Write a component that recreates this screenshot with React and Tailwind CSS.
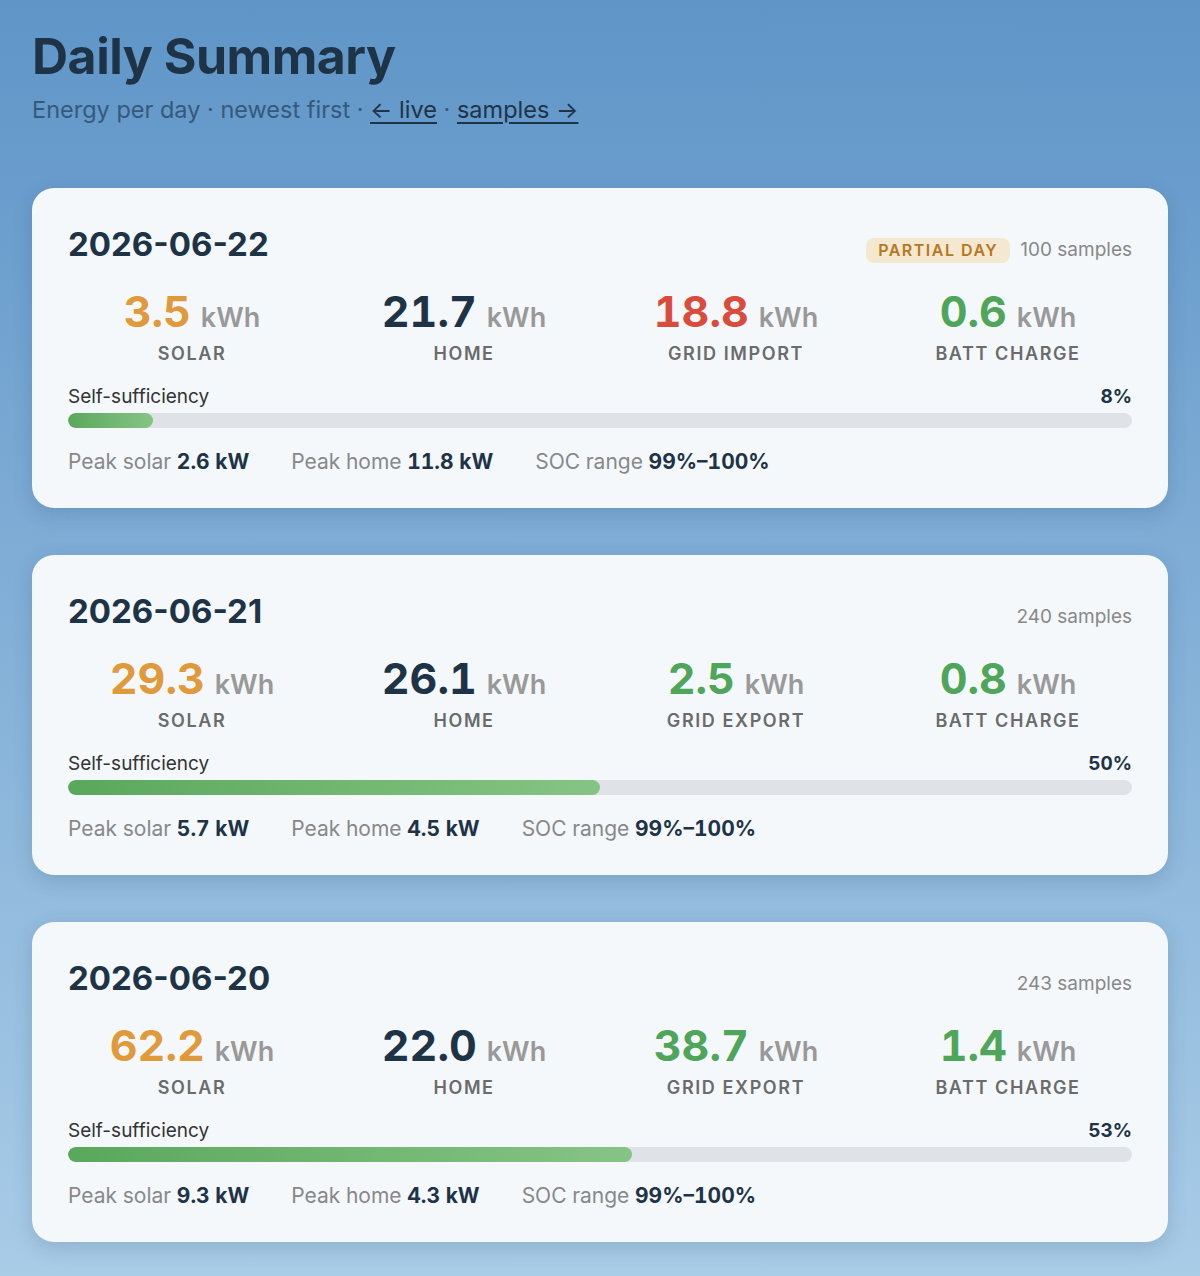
import React from 'react';

const days = [
  {
    date: '2026-06-22',
    partial: true,
    samples: 100,
    metrics: [
      { value: '3.5', label: 'Solar', color: 'text-[#e09a3c]' },
      { value: '21.7', label: 'Home', color: 'text-[#1e3446]' },
      { value: '18.8', label: 'Grid import', color: 'text-[#d94c3d]' },
      { value: '0.6', label: 'Batt charge', color: 'text-[#4fa65a]' },
    ],
    selfSuff: 8,
    peakSolar: '2.6 kW',
    peakHome: '11.8 kW',
    soc: '99%–100%',
  },
  {
    date: '2026-06-21',
    partial: false,
    samples: 240,
    metrics: [
      { value: '29.3', label: 'Solar', color: 'text-[#e09a3c]' },
      { value: '26.1', label: 'Home', color: 'text-[#1e3446]' },
      { value: '2.5', label: 'Grid export', color: 'text-[#4fa65a]' },
      { value: '0.8', label: 'Batt charge', color: 'text-[#4fa65a]' },
    ],
    selfSuff: 50,
    peakSolar: '5.7 kW',
    peakHome: '4.5 kW',
    soc: '99%–100%',
  },
  {
    date: '2026-06-20',
    partial: false,
    samples: 243,
    metrics: [
      { value: '62.2', label: 'Solar', color: 'text-[#e09a3c]' },
      { value: '22.0', label: 'Home', color: 'text-[#1e3446]' },
      { value: '38.7', label: 'Grid export', color: 'text-[#4fa65a]' },
      { value: '1.4', label: 'Batt charge', color: 'text-[#4fa65a]' },
    ],
    selfSuff: 53,
    peakSolar: '9.3 kW',
    peakHome: '4.3 kW',
    soc: '99%–100%',
  },
];

function DayCard({ day }) {
  return (
    <div className="rounded-[22px] bg-[#f4f8fb] px-9 pt-[34px] pb-[32px] shadow-[0_6px_20px_rgba(30,60,100,0.18)]">
      {/* header */}
      <div className="flex items-baseline justify-between">
        <h2 className="text-[33px] font-bold leading-[44px] text-[#1e3446]">{day.date}</h2>
        <div className="flex items-baseline gap-[10px]">
          {day.partial && (
            <span className="rounded-lg bg-[#f5e8d0] px-3 py-[1px] text-[16px] font-semibold leading-[23px] tracking-[1.5px] text-[#b5771f]">
              PARTIAL DAY
            </span>
          )}
          <span className="text-[19px] text-[#888]">{day.samples} samples</span>
        </div>
      </div>

      {/* metrics */}
      <div className="mt-[21px] grid grid-cols-4 gap-6">
        {day.metrics.map((m) => (
          <div key={m.label} className="flex flex-col items-center">
            <div className="flex items-baseline gap-[10px] leading-[48px]">
              <span className={`text-[43px] font-bold tabular-nums ${m.color}`}>{m.value}</span>
              <span className="text-[27px] font-semibold text-[#999]">kWh</span>
            </div>
            <div className="text-[18px] font-semibold uppercase leading-[24px] tracking-[1.6px] text-[#6b6b6b]">
              {m.label}
            </div>
          </div>
        ))}
      </div>

      {/* self-sufficiency */}
      <div className="mt-[17px] flex items-center justify-between text-[19px] leading-[28px]">
        <span className="text-[#333]">Self-sufficiency</span>
        <span className="font-bold tabular-nums text-[#1e3446]">{day.selfSuff}%</span>
      </div>
      <div className="mt-[2px] h-[15px] w-full overflow-hidden rounded-full bg-[#dfe3e8]">
        <div
          className="h-full rounded-full bg-gradient-to-r from-[#5aa85c] to-[#86c485]"
          style={{ width: `${day.selfSuff}%` }}
        />
      </div>

      {/* peaks */}
      <div className="mt-[20px] flex gap-[42px] text-[21px] leading-[28px] tabular-nums">
        <span className="text-[#888]">
          Peak solar <span className="font-bold text-[#1e3446]">{day.peakSolar}</span>
        </span>
        <span className="text-[#888]">
          Peak home <span className="font-bold text-[#1e3446]">{day.peakHome}</span>
        </span>
        <span className="text-[#888]">
          SOC range <span className="font-bold text-[#1e3446]">{day.soc}</span>
        </span>
      </div>
    </div>
  );
}

export default function App() {
  return (
    <div
      className="min-h-[1276px] bg-gradient-to-b from-[#5f95c8] to-[#a9cce7] px-8 pt-[24px] pb-10"
      style={{ fontFamily: 'Inter, "Noto Sans", sans-serif' }}
    >
      <h1 className="text-[50px] font-bold leading-[64px] tracking-[-0.5px] text-[#1e3446]">Daily Summary</h1>
      <p className="mt-[6px] text-[23.5px] leading-[32px] text-[#35597a]">
        Energy per day · newest first ·{' '}
        <a className="text-[#1e3446] underline underline-offset-4">← live</a> ·{' '}
        <a className="text-[#1e3446] underline underline-offset-4">samples →</a>
      </p>

      <div className="mt-[62px] flex flex-col gap-[47px]">
        {days.map((d) => (
          <DayCard key={d.date} day={d} />
        ))}
      </div>
    </div>
  );
}
